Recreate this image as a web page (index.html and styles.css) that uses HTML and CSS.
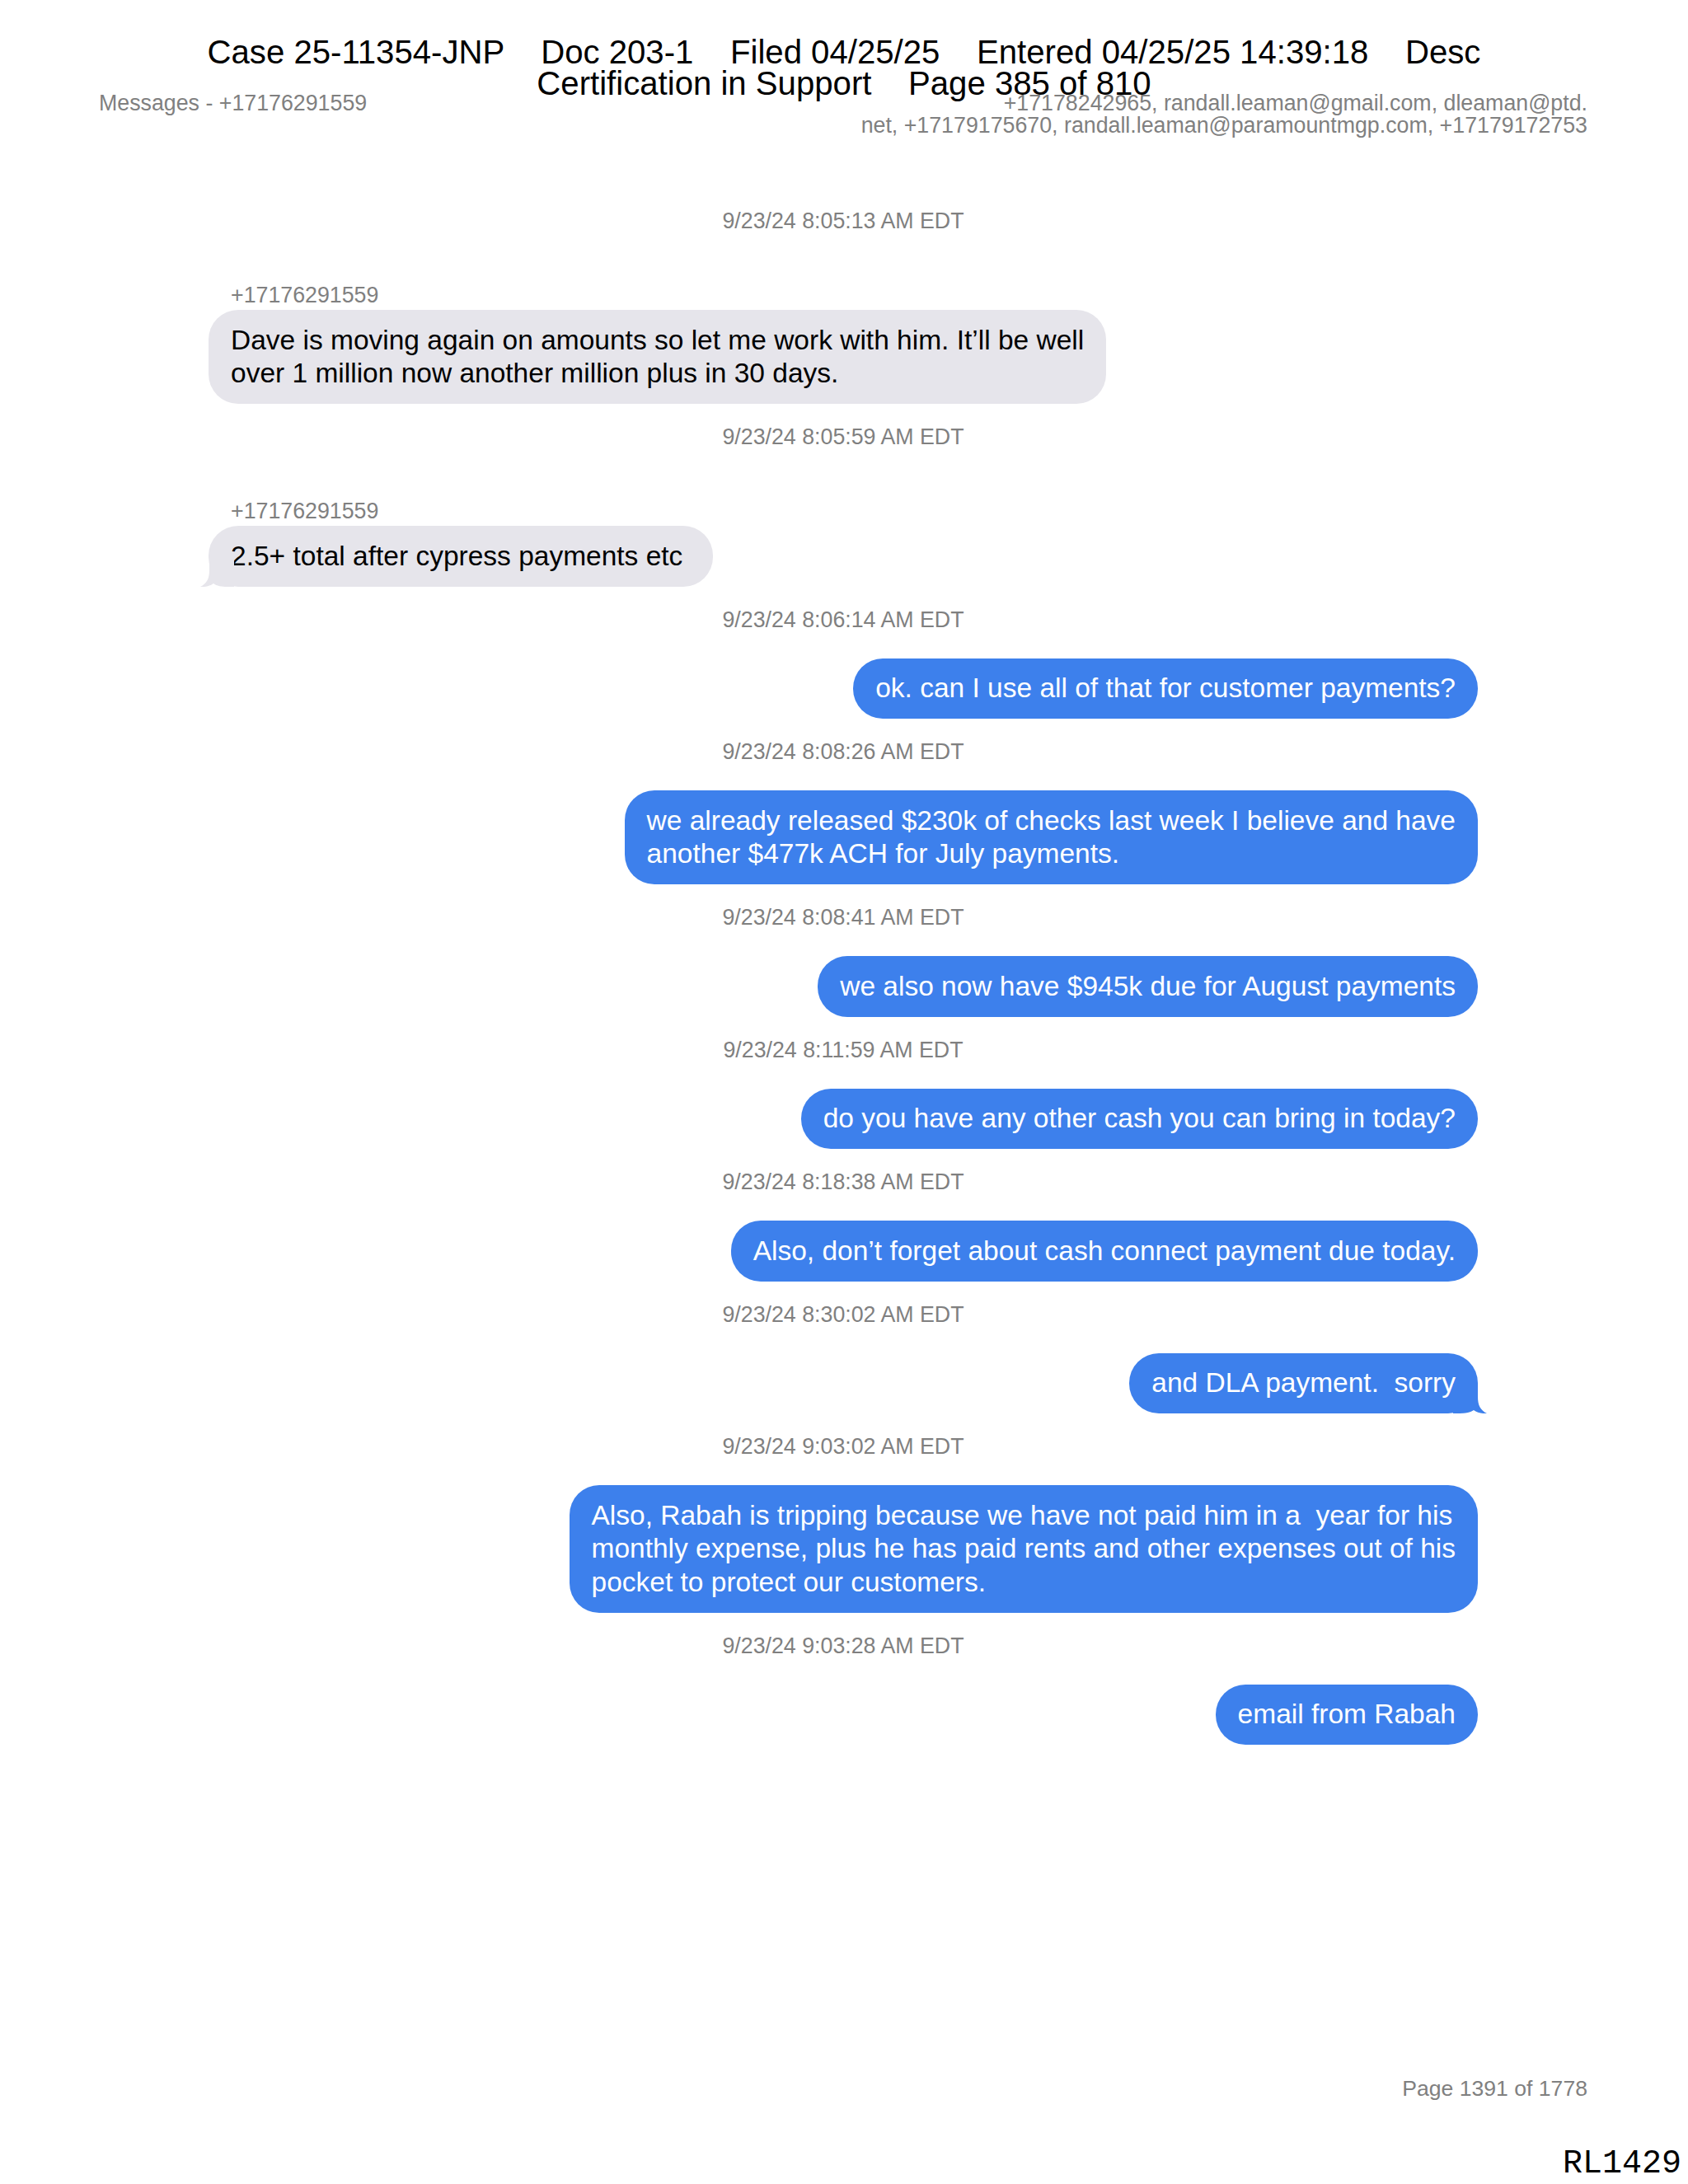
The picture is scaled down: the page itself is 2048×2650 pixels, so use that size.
FILE: index.html
```html
<!DOCTYPE html>
<html>
<head>
<meta charset="utf-8">
<title>Messages</title>
<link rel="stylesheet" href="styles.css">
</head>
<body>
<div class="page">
  <div class="stamp"><div>Case 25-11354-JNP    Doc 203-1    Filed 04/25/25    Entered 04/25/25 14:39:18    Desc</div><div>Certification in Support    Page 385 of 810</div></div>

  <div class="head">
    <div class="head-left">Messages - +17176291559</div>
    <div class="head-right">+17178242965, randall.leaman@gmail.com, dleaman@ptd.<br>net, +17179175670, randall.leaman@paramountmgp.com, +17179172753</div>
  </div>

  <div class="chat">
    <div class="ts">9/23/24 8:05:13 AM EDT</div>
    <div class="msg in">
      <div class="sender">+17176291559</div>
      <div class="bubble gray">Dave is moving again on amounts so let me work with him. It’ll be well<br>over 1 million now another million plus in 30 days.</div>
    </div>

    <div class="ts">9/23/24 8:05:59 AM EDT</div>
    <div class="msg in">
      <div class="sender">+17176291559</div>
      <div class="bubble gray">2.5+ total after cypress payments etc <svg class="tail tail-left" width="41" height="36" viewBox="0 0 41 36"><path d="M0 0 H30 V16 C30 26 33 32 41 36 C35 36.5 29 35 25 32 C21 35 15 36 8 36 H0 Z"/></svg></div>
    </div>

    <div class="ts">9/23/24 8:06:14 AM EDT</div>
    <div class="msg out"><div class="bubble blue">ok. can I use all of that for customer payments?</div></div>

    <div class="ts">9/23/24 8:08:26 AM EDT</div>
    <div class="msg out"><div class="bubble blue">we already released $230k of checks last week I believe and have<br>another $477k ACH for July payments.</div></div>

    <div class="ts">9/23/24 8:08:41 AM EDT</div>
    <div class="msg out"><div class="bubble blue">we also now have $945k due for August payments</div></div>

    <div class="ts">9/23/24 8:11:59 AM EDT</div>
    <div class="msg out"><div class="bubble blue">do you have any other cash you can bring in today?</div></div>

    <div class="ts">9/23/24 8:18:38 AM EDT</div>
    <div class="msg out"><div class="bubble blue">Also, don’t forget about cash connect payment due today.</div></div>

    <div class="ts">9/23/24 8:30:02 AM EDT</div>
    <div class="msg out"><div class="bubble blue">and DLA payment.  sorry<svg class="tail tail-right" width="41" height="36" viewBox="0 0 41 36"><path d="M0 0 H30 V16 C30 26 33 32 41 36 C35 36.5 29 35 25 32 C21 35 15 36 8 36 H0 Z"/></svg></div></div>

    <div class="ts">9/23/24 9:03:02 AM EDT</div>
    <div class="msg out"><div class="bubble blue">Also, Rabah is tripping because we have not paid him in a  year for his<br>monthly expense, plus he has paid rents and other expenses out of his<br>pocket to protect our customers.</div></div>

    <div class="ts">9/23/24 9:03:28 AM EDT</div>
    <div class="msg out"><div class="bubble blue">email from Rabah</div></div>
  </div>

  <div class="foot">
    <div class="pagenum">Page 1391 of 1778</div>
    <div class="bates">RL1429</div>
  </div>
</div>
</body>
</html>
```

FILE: styles.css
```css
html, body {
  margin: 0;
  padding: 0;
  background: #ffffff;
}

body {
  font-family: "Liberation Sans", Arial, Helvetica, sans-serif;
  color: #000000;
}

.page {
  position: relative;
  width: 2048px;
  min-height: 2650px;
  box-sizing: border-box;
  padding-bottom: 4px;
  display: flex;
  flex-direction: column;
}

.stamp {
  position: absolute;
  top: 45px;
  left: 0;
  right: 0;
  z-index: 2;
  text-align: center;
  font-size: 40.15px;
  line-height: 38px;
  white-space: pre;
  color: #000000;
}

.head {
  display: flex;
  justify-content: space-between;
  align-items: flex-start;
  margin: 112px 122px 0 120px;
  font-size: 26.77px;
  line-height: 27px;
  color: #808080;
}

.head-right {
  text-align: right;
}

.chat {
  display: flex;
  flex-direction: column;
  margin: 62px 255px 0 253px;
}

.ts {
  text-align: center;
  font-size: 26.77px;
  line-height: 32px;
  color: #808080;
  margin: 24px 0 31px;
}

.msg {
  display: flex;
  flex-direction: column;
}

.msg.in {
  align-self: flex-start;
  align-items: flex-start;
}

.msg.out {
  align-self: flex-end;
  align-items: flex-end;
}

.sender {
  margin-top: 28px;
  margin-bottom: 3px;
  padding-left: 27px;
  font-size: 26.77px;
  line-height: 30px;
  color: #808080;
}

.bubble {
  position: relative;
  font-size: 33.5px;
  line-height: 40.5px;
  padding: 16.5px 27px;
  border-radius: 36px;
  white-space: pre;
}

.bubble.gray {
  background: #e6e5eb;
  color: #000000;
}

.bubble.blue {
  background: #3d80ec;
  color: #ffffff;
}

.tail {
  position: absolute;
  bottom: 0;
}

.tail-right {
  right: -11px;
}

.tail-left {
  left: -10px;
  transform: scaleX(-1);
}

.gray .tail path {
  fill: #e6e5eb;
}

.blue .tail path {
  fill: #3d80ec;
}

.foot {
  margin-top: auto;
  display: flex;
  flex-direction: column;
  align-items: flex-end;
}

.pagenum {
  margin-right: 122px;
  font-size: 26.6px;
  line-height: 27px;
  color: #808080;
}

.bates {
  margin-top: 58px;
  margin-right: 8px;
  font-family: "Liberation Mono", "Courier New", monospace;
  font-size: 40px;
  line-height: 40px;
  color: #000000;
}
```
